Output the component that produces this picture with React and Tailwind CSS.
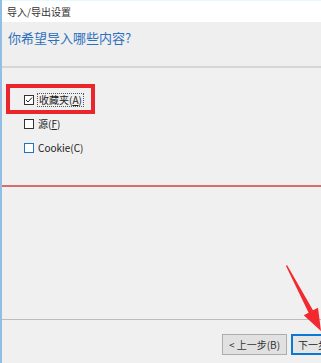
import React from "react";

const font = { fontFamily: '"Noto Sans CJK SC", "Noto Sans", sans-serif' };

function Box({ checked, blue }) {
  return (
    <span
      className={`relative inline-block w-[10px] h-[10px] border bg-white ${blue ? "border-[#1f74c9]" : "border-[#333]"}`}
    >
      {checked && (
        <svg className="absolute inset-0" width="8" height="8" viewBox="0 0 8 8">
          <path d="M1 4 L3 6 L7 1.5" stroke="#222" strokeWidth="1" fill="none" />
        </svg>
      )}
    </span>
  );
}

export default function App() {
  return (
    <div
      className="relative w-[321px] h-[363px] overflow-hidden bg-[#f0f0f0] flex flex-col border-l-2 border-[#93bee4]"
      style={font}
    >
      {/* title */}
      <div className="h-[22px] bg-white flex items-center pl-[5px] text-[10px] text-[#333] border-t border-[#e3fbff]">
        导入/导出设置
      </div>
      {/* header */}
      <div className="h-[44px] bg-[#efefef] pl-[6px] pt-[8px]">
        <div className="text-[13px] leading-[16px] text-[#2e6fbe]">你希望导入哪些内容?</div>
      </div>
      <div className="h-[2px] bg-[#d6d6d6]" />
      {/* body */}
      <div className="flex-1 flex flex-col bg-[#f0f0f0]">
        <div className="pt-[20px] pl-[22px] flex flex-col text-[10px] text-[#222]">
          <div className="h-[24px] flex items-center gap-[3px]">
            <Box checked />
            <span className="border border-dotted border-[#555] px-[1px] leading-[12px]">
              收藏夹(<span className="underline">A</span>)
            </span>
          </div>
          <div className="h-[24px] flex items-center gap-[3px]">
            <Box />
            <span className="px-[1px] leading-[12px]">
              源(<span className="underline">F</span>)
            </span>
          </div>
          <div className="h-[24px] flex items-center gap-[3px]">
            <Box blue />
            <span className="px-[1px] leading-[12px]">Cookie(C)</span>
          </div>
        </div>
        <div className="mt-[25px] h-[2px] bg-[#d86b6b]" />
        <div className="flex-1" />
        <div className="h-px bg-[#bcbcbc]" />
        {/* footer */}
        <div className="h-[43px] pt-[14px] pl-[220px] flex gap-[4px] shrink-0">
          <button className="w-[65px] h-[21px] shrink-0 bg-[#e1e1e1] border border-[#adadad] text-[10px] text-[#333] flex items-center justify-center">
            &lt; 上一步(B)
          </button>
          <button className="w-[65px] h-[21px] shrink-0 bg-[#e5e5e5] border-2 border-[#0a78d4] text-[10px] text-[#222] flex items-center justify-start pl-[5px]">
            下一步(N) &gt;
          </button>
        </div>
      </div>

      {/* annotations */}
      <div className="absolute left-[4px] top-[84px] w-[89px] h-[30px] border-[4px] border-[#ea262b]" />
      <svg className="absolute inset-0 pointer-events-none" width="321" height="363" viewBox="0 0 321 363">
        <polygon
          points="285,265 311,310.3 316,307.8 319,331 301.7,315.2 306.6,312.7 284,266"
          fill="#f22a2f"
        />
      </svg>
    </div>
  );
}
